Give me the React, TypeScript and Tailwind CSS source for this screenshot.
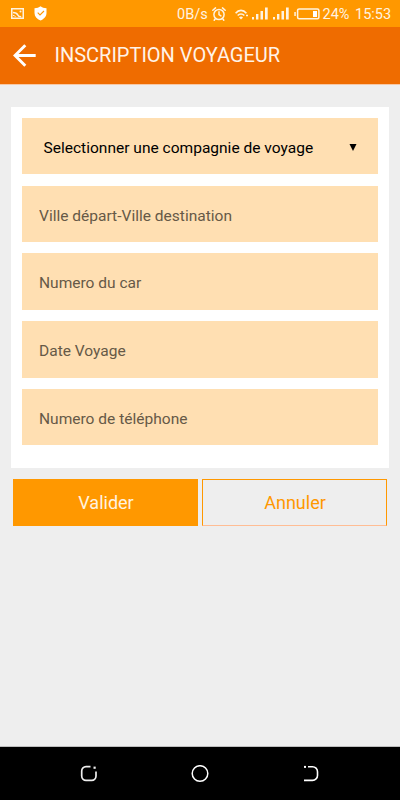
const fields = [
    "Ville départ-Ville destination",
    "Numero du car",
    "Date Voyage",
    "Numero de téléphone",
];

function PictureIcon() {
    return (
        <svg width="13" height="11" viewBox="0 0 13 11" fill="none" stroke="#fff3e0">
            <rect x="0.750" y="0.750" width="11.500" height="9.500" strokeWidth="1.500" />
            <path d="M2 4.500c2.600 0 4 .8 4.600 2.200.5 1.200 1.600 2.100 3.600 2.100" strokeWidth="1.600" />
            <path d="M2 7.400c1.300 0 2 .5 2.500 1.400" strokeWidth="1" />
            <circle cx="9.500" cy="3.500" r="1" fill="#fff3e0" stroke="none" />
        </svg>
    );
}

function ShieldIcon() {
    return (
        <svg width="13" height="15" viewBox="0 0 13 15" fill="none">
            <path d="M6.500 0.300c1.500 1.300 3.500 1.900 6 1.900v4.800c0 3.400-2.400 6-6 7.500C2.900 13 .5 10.400.5 7V2.200c2.500 0 4.500-.6 6-1.900z" fill="#fff" />
            <path d="M3.700 6.700l2.300 2.300 4-4" stroke="#ff9800" strokeWidth="1.100" />
        </svg>
    );
}

function AlarmIcon() {
    return (
        <svg width="14" height="14" viewBox="0 0 14 14" fill="none" stroke="#fff3e0" strokeWidth="1.500" strokeLinecap="round">
            <circle cx="7" cy="7.500" r="5.100" />
            <path d="M7 4.700v3l1.900 1.200M.8 3.200L3.500.9M10.500.9l2.700 2.300M3.100 12l-.9 1.200M10.900 12l.9 1.200" />
        </svg>
    );
}

function WifiIcon() {
    return (
        <svg width="14" height="11" viewBox="0 0 14 11" fill="none" stroke="#fff3e0" strokeWidth="1.600">
            <path d="M.6 4.200C3.700.4 8.300.4 11.400 4.200M2.700 6.600C4.600 4.400 7.400 4.400 9.300 6.600" />
            <path d="M4 8.500c1.200-1.400 2.800-1.400 4 0L6 10.600z" fill="#fff3e0" stroke="none" />
            <path d="M11 6.500h2" />
        </svg>
    );
}

function SignalIcon() {
    return (
        <svg width="17" height="13" viewBox="0 0 17 13" fill="#fff3e0">
            <rect x="0" y="10" width="2" height="2.500" />
            <rect x="4" y="7" width="2.400" height="5.500" />
            <rect x="8.500" y="4" width="2.500" height="8.500" />
            <rect x="13" y="0.500" width="2.700" height="12" />
        </svg>
    );
}

function BatteryIcon() {
    return (
        <svg width="26" height="12" viewBox="0 0 26 12" fill="none">
            <rect x="0.300" y="4" width="1.500" height="4" fill="#fff3e0" />
            <rect x="3.600" y="0.900" width="21.300" height="9.900" rx="1.500" stroke="#fff3e0" strokeWidth="1.500" />
            <rect x="19" y="3" width="4" height="6" fill="#fff" />
        </svg>
    );
}

function StatusBar() {
    return (
        <div className="flex h-[27px] items-center bg-[#ff9800] pl-[11px] text-[14.500px] text-[#fff3e0]">
            <PictureIcon />
            <div className="ml-[10px]"><ShieldIcon /></div>
            <span className="ml-[130px] w-[34px] whitespace-nowrap pt-[2px]">0B/s</span>
            <div className="ml-px"><AlarmIcon /></div>
            <div className="ml-[9px] pt-[2px]"><WifiIcon /></div>
            <div className="ml-[3px]"><SignalIcon /></div>
            <div className="ml-[4px]"><SignalIcon /></div>
            <div className="ml-[4px]"><BatteryIcon /></div>
            <span className="ml-[2.500px] w-[32.500px] whitespace-nowrap pt-[2px]">24%</span>
            <span className="whitespace-nowrap pt-[2px]">15:53</span>
        </div>
    );
}

function Header() {
    return (
        <header className="flex h-[58px] items-center border-b border-[#f7c8a5] bg-[#ef6c00] pl-[13px]">
            <button aria-label="Retour" className="pb-px">
                <svg width="23" height="23" viewBox="0 0 23 23" fill="none" stroke="#fff" strokeWidth="2.900">
                    <path d="M12.300 1.200L2 11.500l10.300 10.300M2 11.500h20.700" />
                </svg>
            </button>
            <h1 className="ml-[18.500px] whitespace-nowrap pb-px text-[20px] leading-none text-[#fff3e8]">INSCRIPTION VOYAGEUR</h1>
        </header>
    );
}

function NavBar() {
    return (
        <nav className="flex h-[54px] items-center justify-between border-t border-[#bdbdbd] bg-black px-[80px]">
            <svg width="18" height="18" viewBox="0 0 18 18" fill="none" stroke="#eee" strokeWidth="1.700">
                <path d="M10.500 1.600H6A4.300 4.300 0 0 0 1.700 5.900v5.200A4.300 4.300 0 0 0 6 15.400h5.700A4.300 4.300 0 0 0 16 11.100V6.600" />
                <rect x="13.500" y="1.600" width="2.200" height="2.200" fill="#eee" stroke="none" />
            </svg>
            <svg width="18" height="18" viewBox="0 0 18 18" fill="none" stroke="#fff" strokeWidth="1.500">
                <circle cx="9" cy="8.500" r="7.800" />
            </svg>
            <svg width="18" height="18" viewBox="0 0 18 18" fill="none" stroke="#fff" strokeWidth="1.600">
                <path d="M6 1.700h4.500a5 5 0 0 1 5 5v3.700a5 5 0 0 1-5 5H2" />
                <rect x="2" y="0.900" width="2" height="2" fill="#fff" stroke="none" />
            </svg>
        </nav>
    );
}

export default function App() {
    return (
        <div className="flex h-[800px] w-[400px] flex-col overflow-hidden bg-[#eeeeee] font-['Roboto',sans-serif]">
            <StatusBar />
            <Header />
            <main className="flex-1 px-[11px] pt-[22px]">
                <form>
                    <div className="flex h-[361px] flex-col gap-[11.350px] bg-white p-[11px]">
                        <button type="button" className="flex h-[56.400px] items-center justify-between bg-[#ffdfb2] pr-[21px] pl-[21.500px] pt-[4px] text-[15.540px] text-black">
                            <span className="whitespace-nowrap">Selectionner une compagnie de voyage</span>
                            <svg className="mb-[2px]" width="8" height="7" viewBox="0 0 8 7">
                                <path d="M.5 0h7L4 7z" fill="#000" />
                            </svg>
                        </button>
                        {fields.map((label) => (
                            <input
                                key={label}
                                placeholder={label}
                                className="h-[56.400px] w-full bg-[#ffdfb2] px-[17px] pt-[3.500px] text-[15.540px] placeholder:text-[#665947]"
                            />
                        ))}
                    </div>
                    <div className="mt-[11px] grid h-[46.500px] grid-cols-2 gap-1 px-[2px] text-[18px]">
                        <button type="button" className="bg-[#ff9800] pl-px text-[#fff3e0]">Valider</button>
                        <button type="button" className="border border-[#ff9800] border-b-[#ffbd94] pl-px text-[#ff9800]">Annuler</button>
                    </div>
                </form>
            </main>
            <NavBar />
        </div>
    );
}
